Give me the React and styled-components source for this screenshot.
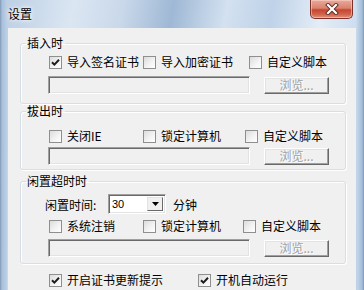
import React from 'react';
import styled, {createGlobalStyle} from 'styled-components';

const Global = createGlobalStyle`
    body {
        margin: 0;
        background: #fff;
        font-family: "Noto Sans CJK SC", "Liberation Sans", sans-serif;
        font-size: 12px;
        color: #000;
    }
`

export default function App() {
    return (
        <Window>
            <Global/>
            <TitleBar>
                <Title>设置</Title>
                <CloseButton>
                    <svg width="14" height="12" viewBox="0 0 14 12">
                        <path d="M3 2 L11 10 M11 2 L3 10" stroke="#5a2a22" strokeWidth="4" strokeLinecap="square"/>
                        <path d="M3 2 L11 10 M11 2 L3 10" stroke="#fff" strokeWidth="2.2" strokeLinecap="square"/>
                    </svg>
                </CloseButton>
            </TitleBar>
            <Client>
                <Group>
                    <Legend>插入时</Legend>
                    <GroupBody $top={5} $bottom={9}>
                        <CheckRow>
                            <Check width={94} checked label="导入签名证书"/>
                            <Check width={106} label="导入加密证书"/>
                            <Check label="自定义脚本"/>
                        </CheckRow>
                        <PathRow $gap={7}>
                            <PathBox/>
                            <BrowseButton disabled>浏览...</BrowseButton>
                        </PathRow>
                    </GroupBody>
                </Group>
                <Group>
                    <Legend>拔出时</Legend>
                    <GroupBody $top={11} $bottom={4}>
                        <CheckRow>
                            <Check width={94} label="关闭IE"/>
                            <Check width={102} label="锁定计算机"/>
                            <Check label="自定义脚本"/>
                        </CheckRow>
                        <PathRow $gap={4}>
                            <PathBox/>
                            <BrowseButton disabled>浏览...</BrowseButton>
                        </PathRow>
                    </GroupBody>
                </Group>
                <Group $mt={4}>
                    <Legend>闲置超时时</Legend>
                    <GroupBody $top={6} $bottom={6}>
                        <IdleRow>
                            <IdleLabel>闲置时间:</IdleLabel>
                            <Combo>
                                <ComboText>30</ComboText>
                                <ComboArrow>
                                    <svg width="7" height="4" viewBox="0 0 7 4">
                                        <path d="M0 0 H7 L3.5 4 Z" fill="#000"/>
                                    </svg>
                                </ComboArrow>
                            </Combo>
                            <span>分钟</span>
                        </IdleRow>
                        <CheckRow $mt={5}>
                            <Check width={94} label="系统注销"/>
                            <Check width={100} label="锁定计算机"/>
                            <Check label="自定义脚本"/>
                        </CheckRow>
                        <PathRow $gap={6}>
                            <PathBox/>
                            <BrowseButton disabled>浏览...</BrowseButton>
                        </PathRow>
                    </GroupBody>
                </Group>
                <BottomRow>
                    <Check width={149} checked label="开启证书更新提示"/>
                    <Check checked label="开机自动运行"/>
                </BottomRow>
            </Client>
        </Window>
    );
}

function Check({width, checked, label}) {
    return (
        <CheckItem $width={width}>
            <Box>
                {checked &&
                    <svg width="11" height="11" viewBox="0 0 11 11">
                        <path d="M2 5.2 L4.4 7.6 L9 2.8" stroke="#1c1c1c" strokeWidth="2" fill="none"/>
                    </svg>
                }
            </Box>
            <span>{label}</span>
        </CheckItem>
    );
}

const Window = styled.div`
    width: 364px;
    height: 290px;
    overflow: hidden;
    box-sizing: border-box;
    padding: 0 8px;
    display: flex;
    flex-direction: column;
    background:
        linear-gradient(90deg, #7f98b6 0, #a9c0da 2px, #bcd0e6 7px, transparent 8px, transparent 356px, #c3d6ea 357px, #a6bed9 362px, #7f98b6 364px),
        linear-gradient(100deg, #b9cde3 0%, #dbe6f2 18%, #c9d8ea 30%, #9fb8d5 42%, #d3e1f0 55%, #bfd2e8 66%, #e4edf7 78%, #c6d8ec 90%, #b3c9e2 100%);
`

const TitleBar = styled.div`
    height: 28px;
    flex-shrink: 0;
    display: flex;
    justify-content: space-between;
    align-items: flex-start;
`

const Title = styled.div`
    margin-top: 7px;
    font-size: 12px;
    line-height: 14px;
    color: #000;
    text-shadow: 0 0 6px #fff, 0 0 3px #fff;
`

const CloseButton = styled.div`
    width: 43px;
    height: 19px;
    margin-right: 3px;
    box-sizing: border-box;
    border: 1px solid #7e3128;
    border-top: none;
    border-radius: 0 0 5px 5px;
    background: linear-gradient(180deg, #e9a99b 0%, #d98370 45%, #c7452f 55%, #d0644c 80%, #e3927c 100%);
    box-shadow: inset 0 0 0 1px rgba(255, 220, 210, 0.5);
    display: flex;
    align-items: center;
    justify-content: center;
`

const Client = styled.div`
    flex: 1;
    background: #f0f0f0;
    padding: 8px 10px 0 12px;
`

const Group = styled.fieldset`
    margin: ${p => p.$mt || 0}px 0 0 0;
    padding: 0;
    border: 1px solid #d5dfe5;
    border-radius: 3px;
    box-shadow: inset 1px 1px 0 #fff, 1px 1px 0 #fff;
`

const Legend = styled.legend`
    margin-left: 5px;
    padding: 0 2px 0 1px;
    font-size: 12px;
    line-height: 14px;
`

const GroupBody = styled.div`
    padding: ${p => p.$top}px 0 ${p => p.$bottom}px 27px;
`

const CheckRow = styled.div`
    display: flex;
    align-items: center;
    height: 14px;
    padding-left: 1px;
    margin-top: ${p => p.$mt || 0}px;
`

const CheckItem = styled.label`
    display: flex;
    align-items: center;
    gap: 5px;
    width: ${p => p.$width ? p.$width + 'px' : 'auto'};
    flex-shrink: 0;
    line-height: 14px;
    white-space: nowrap;
`

const Box = styled.span`
    width: 13px;
    height: 13px;
    box-sizing: border-box;
    border: 1px solid #8e8f8f;
    background: linear-gradient(135deg, #dcdcdc 0%, #f4f4f4 60%, #fff 100%);
    display: flex;
    align-items: center;
    justify-content: center;
    flex-shrink: 0;
`

const PathRow = styled.div`
    display: flex;
    align-items: center;
    gap: 14px;
    margin-top: ${p => p.$gap}px;
`

const PathBox = styled.div`
    width: 202px;
    height: 18px;
    box-sizing: border-box;
    border-top: 1px solid #a0a0a0;
    border-left: 1px solid #a0a0a0;
    border-bottom: 1px solid #fff;
    border-right: 1px solid #fff;
    box-shadow: inset 1px 1px 0 #696969, inset -1px -1px 0 #e3e3e3;
    background: #f0f0f0;
`

const BrowseButton = styled.button`
    width: 65px;
    height: 17px;
    box-sizing: border-box;
    padding: 0;
    border-top: 1px solid #fff;
    border-left: 1px solid #fff;
    border-bottom: 1px solid #696969;
    border-right: 1px solid #696969;
    box-shadow: inset -1px -1px 0 #a0a0a0, inset 1px 1px 0 #e3e3e3;
    background: #f0f0f0;
    font-family: inherit;
    font-size: 12px;
    line-height: 14px;
    color: #a0a0a0;
    text-shadow: 1px 1px 0 #fff;
`

const IdleRow = styled.div`
    display: flex;
    align-items: center;
    height: 20px;
    margin-left: -3px;
    gap: 7px;
`

const IdleLabel = styled.span`
    width: 56px;
`

const Combo = styled.div`
    width: 58px;
    height: 20px;
    box-sizing: border-box;
    border-top: 1px solid #a0a0a0;
    border-left: 1px solid #a0a0a0;
    border-bottom: 1px solid #fff;
    border-right: 1px solid #fff;
    box-shadow: inset 1px 1px 0 #696969, inset -1px -1px 0 #e3e3e3;
    background: #fff;
    display: flex;
    align-items: stretch;
    padding: 2px;
`

const ComboText = styled.span`
    flex: 1;
    padding-left: 1px;
    font-family: "Liberation Sans", sans-serif;
    font-size: 11px;
    line-height: 14px;
`

const ComboArrow = styled.span`
    width: 16px;
    box-sizing: border-box;
    background: #f0f0f0;
    border-top: 1px solid #e3e3e3;
    border-left: 1px solid #e3e3e3;
    border-bottom: 1px solid #696969;
    border-right: 1px solid #696969;
    display: flex;
    align-items: center;
    justify-content: center;
`

const BottomRow = styled.div`
    display: flex;
    align-items: center;
    height: 14px;
    margin-top: 9px;
    padding-left: 29px;
`
